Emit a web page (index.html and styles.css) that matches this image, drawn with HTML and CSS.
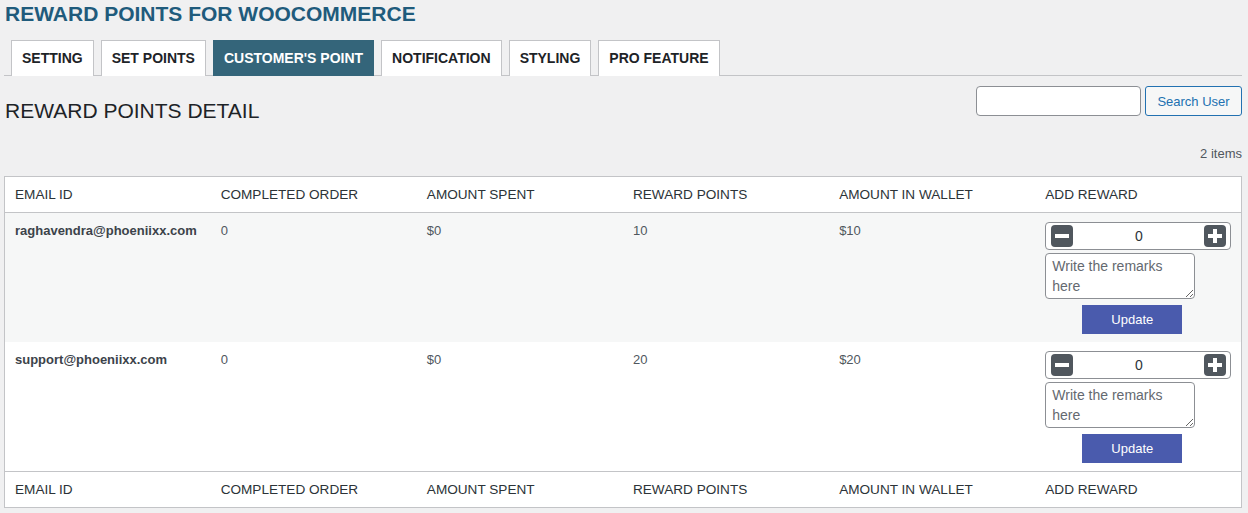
FILE: index.html
```html
<!DOCTYPE html>
<html>
<head>
<meta charset="utf-8">
<link rel="stylesheet" href="styles.css">
</head>
<body>
<div class="wrap">
  <h1 class="title">REWARD POINTS FOR WOOCOMMERCE</h1>
  <nav class="tabs">
    <a class="tab">SETTING</a>
    <a class="tab">SET POINTS</a>
    <a class="tab active">CUSTOMER'S POINT</a>
    <a class="tab">NOTIFICATION</a>
    <a class="tab">STYLING</a>
    <a class="tab">PRO FEATURE</a>
  </nav>
  <div class="head">
    <h2 class="subtitle">REWARD POINTS DETAIL</h2>
    <div class="search">
      <input class="search-input" type="text">
      <button class="search-btn">Search User</button>
    </div>
  </div>
  <div class="count">2 items</div>
  <table class="grid">
    <thead>
      <tr><th>EMAIL ID</th><th>COMPLETED ORDER</th><th>AMOUNT SPENT</th><th>REWARD POINTS</th><th>AMOUNT IN WALLET</th><th>ADD REWARD</th></tr>
    </thead>
    <tbody>
      <tr class="alt">
        <td class="email">raghavendra@phoeniixx.com</td><td>0</td><td>$0</td><td>10</td><td>$10</td>
        <td>
          <div class="reward">
            <div class="counter">
              <span class="ctl"><svg width="22" height="22" viewBox="0 0 22 22"><rect x="0" y="0" width="22" height="22" rx="4" fill="#50575e"/><rect x="4" y="9" width="14" height="4" fill="#fff"/></svg></span>
              <span class="val">0</span>
              <span class="ctl"><svg width="22" height="22" viewBox="0 0 22 22"><rect x="0" y="0" width="22" height="22" rx="4" fill="#50575e"/><rect x="4" y="9" width="14" height="4" fill="#fff"/><rect x="9" y="4" width="4" height="14" fill="#fff"/></svg></span>
            </div>
            <textarea class="remarks" placeholder="Write the remarks here"></textarea>
            <button class="update">Update</button>
          </div>
        </td>
      </tr>
      <tr>
        <td class="email">support@phoeniixx.com</td><td>0</td><td>$0</td><td>20</td><td>$20</td>
        <td>
          <div class="reward">
            <div class="counter">
              <span class="ctl"><svg width="22" height="22" viewBox="0 0 22 22"><rect x="0" y="0" width="22" height="22" rx="4" fill="#50575e"/><rect x="4" y="9" width="14" height="4" fill="#fff"/></svg></span>
              <span class="val">0</span>
              <span class="ctl"><svg width="22" height="22" viewBox="0 0 22 22"><rect x="0" y="0" width="22" height="22" rx="4" fill="#50575e"/><rect x="4" y="9" width="14" height="4" fill="#fff"/><rect x="9" y="4" width="4" height="14" fill="#fff"/></svg></span>
            </div>
            <textarea class="remarks" placeholder="Write the remarks here"></textarea>
            <button class="update">Update</button>
          </div>
        </td>
      </tr>
    </tbody>
    <tfoot>
      <tr><th>EMAIL ID</th><th>COMPLETED ORDER</th><th>AMOUNT SPENT</th><th>REWARD POINTS</th><th>AMOUNT IN WALLET</th><th>ADD REWARD</th></tr>
    </tfoot>
  </table>
</div>
</body>
</html>
```

FILE: styles.css
```css
* { box-sizing: border-box; }
html, body { margin: 0; padding: 0; background: #f0f0f1; }
body {
  font-family: "Liberation Sans", Arial, sans-serif;
  color: #3c434a;
  font-size: 13px;
}
.wrap { padding: 0 6px 0 4px; }
.title {
  margin: 0;
  padding: 3px 0 0 1px;
  height: 40px;
  font-size: 21px;
  line-height: 22px;
  font-weight: 700;
  color: #1f5b7c;
}
.tabs {
  display: flex;
  gap: 7px;
  padding-left: 7px;
  border-bottom: 1px solid #c3c4c7;
  height: 36px;
}
.tab {
  display: block;
  height: 36px;
  padding: 0 10px;
  border: 1px solid #c3c4c7;
  border-bottom: none;
  background: #fff;
  color: #1d2327;
  font-size: 14px;
  font-weight: 700;
  line-height: 34px;
}
.tab.active {
  background: #34657a;
  border-color: #34657a;
  color: #fff;
}
.head {
  display: flex;
  justify-content: space-between;
  align-items: flex-start;
  padding-top: 10px;
  height: 70px;
}
.subtitle {
  margin: 0;
  padding: 12px 0 0 1px;
  font-size: 21px;
  font-weight: 400;
  line-height: 26px;
  color: #1d2327;
}
.search { display: flex; gap: 4px; }
.search-input {
  width: 165px;
  height: 30px;
  border: 1px solid #8c8f94;
  border-radius: 4px;
  background: #fff;
  margin: 0;
}
.search-btn {
  height: 30px;
  width: 97px;
  border: 1px solid #2271b1;
  border-radius: 3px;
  background: #f6f7f7;
  color: #2271b1;
  font-family: inherit;
  font-size: 13px;
  padding: 0;
  margin: 0;
}
.count {
  text-align: right;
  font-size: 13px;
  color: #50575e;
  height: 30px;
  line-height: 16px;
}
.grid {
  width: 100%;
  table-layout: fixed;
  border-collapse: collapse;
  background: #fff;
  border: 1px solid #c3c4c7;
  margin-top: 0;
}
.grid th {
  text-align: left;
  font-weight: 400;
  font-size: 13.6px;
  color: #2c3338;
  height: 36px;
  padding: 0 10px;
}
.grid thead th { border-bottom: 1px solid #c3c4c7; }
.grid tfoot th { border-top: 1px solid #c3c4c7; }
.grid td {
  vertical-align: top;
  padding: 10px 10px 8px;
  font-size: 13px;
  line-height: 16px;
  color: #50575e;
}
.grid tr.alt td { background: #f6f7f7; }
.grid td.email { font-weight: 700; color: #3c434a; }
.reward {
  display: flex;
  flex-direction: column;
  align-items: flex-start;
  margin-top: -1px;
}
.counter {
  display: flex;
  align-items: center;
  justify-content: space-between;
  width: 186px;
  height: 28px;
  border: 1px solid #8c8f94;
  border-radius: 4px;
  background: #fff;
  padding: 0 4px 0 5px;
}
.ctl { display: flex; }
.val { font-size: 14px; color: #2c3338; }
.remarks {
  margin: 3px 0 0;
  width: 150px;
  height: 46px;
  border: 1px solid #8c8f94;
  border-radius: 4px;
  padding: 2px 6px;
  font-family: inherit;
  font-size: 14px;
  line-height: 20px;
  resize: both;
  background: #fff;
}
.remarks::placeholder { color: #646970; }
.update {
  margin: 6px 0 0 37px;
  width: 100px;
  height: 29px;
  border: none;
  background: #4a5bad;
  color: #fff;
  font-family: inherit;
  font-size: 13px;
  padding: 0;
}
```
